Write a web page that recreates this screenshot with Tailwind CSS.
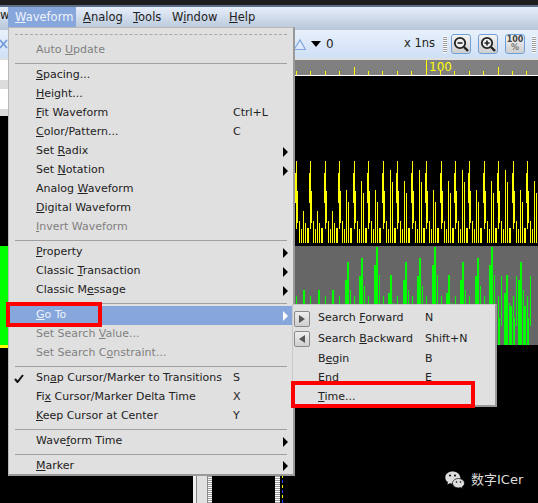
<!DOCTYPE html>
<html lang="en">

<head>
    <meta charset="UTF-8">
    <title>Waveform menu</title>
    <script src="https://cdn.jsdelivr.net/npm/@tailwindcss/browser@4"></script>
</head>

<body class="bg-black">
    <div class="relative w-[538px] h-[503px] overflow-hidden bg-black flex flex-col font-['DejaVu_Sans',sans-serif] text-[11px] text-[#222]">

        <!-- title strip -->
        <div class="h-[7px] shrink-0 bg-[#1d1d1d] border-b-2 border-[#5f6f85]"></div>

        <!-- menu bar -->
        <div class="h-[23px] shrink-0 flex bg-gradient-to-b from-[#e6eefa] to-[#b7c6d9] pb-px text-[11.5px]">
            <div class="w-[8px] overflow-hidden text-right">w</div>
            <div class="w-[68px] pl-[7px] flex items-center bg-[#86a6dc] text-[#eef3fb]"><span><u>W</u>aveform</span></div>
            <div class="pl-[7px] w-[57px] flex items-center"><span><u>A</u>nalog</span></div>
            <div class="w-[39px] flex items-center"><span><u>T</u>ools</span></div>
            <div class="w-[57px] flex items-center"><span>W<u>i</u>ndow</span></div>
            <div class="flex items-center"><span><u>H</u>elp</span></div>
        </div>

        <!-- toolbar -->
        <div class="h-[28px] shrink-0 flex items-center bg-gradient-to-b from-[#e8f0fc] to-[#cfe0f5] text-[#222]">
            <svg class="ml-[-1px] w-[9px] h-[14px]" viewBox="0 0 9 14"><path d="M1 3l7 8M8 3l-7 8" stroke="#6f9bd8" stroke-width="1.6" fill="none" /></svg>
            <svg class="ml-[286px] w-[12px] h-[14px]" viewBox="0 0 12 14"><path d="M0 12.5h11.5L6 3z" stroke="#7fa6dc" stroke-width="1.2" fill="#dfe9f7" /></svg>
            <div class="ml-[5px] w-0 h-0 border-x-[5px] border-x-transparent border-t-[6px] border-t-black"></div>
            <div class="ml-[5px] w-[78px] text-[12px]">0</div>
            <div class="w-[34px] text-[11.5px] whitespace-nowrap">x 1ns</div>
            <div class="ml-[5px] w-[4px] h-[17px] bg-[repeating-linear-gradient(#fff_0_1px,#9a9a9a_1px_2px)]"></div>
            <!-- zoom out -->
            <div class="ml-[4px] w-[20px] h-[20px] rounded-[3px] border border-[#6f9fd6] bg-gradient-to-b from-[#f4f4f4] to-[#cfcfcf] flex items-center justify-center">
                <svg class="w-[18px] h-[18px]" viewBox="0 0 18 18"><circle cx="8" cy="8" r="5.2" fill="#eee" stroke="#222" stroke-width="1.8" /><path d="M5.5 8h5" stroke="#222" stroke-width="1.6" /><path d="M12 12l4 4" stroke="#222" stroke-width="2.4" /></svg>
            </div>
            <!-- zoom in -->
            <div class="ml-[7px] w-[20px] h-[20px] rounded-[3px] border border-[#6f9fd6] bg-gradient-to-b from-[#f4f4f4] to-[#cfcfcf] flex items-center justify-center">
                <svg class="w-[18px] h-[18px]" viewBox="0 0 18 18"><circle cx="8" cy="8" r="5.2" fill="#eee" stroke="#222" stroke-width="1.8" /><path d="M5.5 8h5M8 5.5v5" stroke="#222" stroke-width="1.6" /><path d="M12 12l4 4" stroke="#222" stroke-width="2.4" /></svg>
            </div>
            <!-- zoom 100% -->
            <div class="ml-[7px] w-[20px] h-[20px] rounded-[3px] border border-[#6f9fd6] bg-gradient-to-b from-[#f4f4f4] to-[#cfcfcf] flex flex-col items-center justify-center font-bold text-[8px] leading-[8px] text-[#444]">
                <span>100</span><span class="text-[#777]">%</span>
            </div>
            <div class="ml-[7px] w-[4px] h-[17px] bg-[repeating-linear-gradient(#fff_0_1px,#9a9a9a_1px_2px)]"></div>
        </div>

        <!-- window body -->
        <div class="flex-1 flex min-h-0">
            <div class="w-[8px] shrink-0 flex flex-col">
                <div class="h-[2px] bg-[#e0e0e0]"></div>
                <div class="h-[20px] bg-white"></div>
                <div class="h-[9px] bg-[#dcdcdc]"></div>
                <div class="h-[20px] bg-white"></div>
                <div class="h-[7px] bg-[#dcdcdc]"></div>
                <div class="h-[130px] bg-black"></div>
                <div class="h-[99px] bg-[#00ff00]"></div>
                <div class="h-[3px] bg-[#ffff00]"></div>
            </div>
            <div class="flex-1 flex flex-col">
                <div class="h-[2px] bg-[#e0e0e0]"></div>
                <svg id="ruler" class="block h-[16px] w-full bg-[#808080] border-b border-white" width="530" height="16">
                    <text x="421" y="11" fill="#ffff00" font-size="12" font-family="DejaVu Sans">100</text>
                </svg>
                <svg id="yellow" class="block h-[170px] w-full" width="530" height="170"></svg>
                <svg id="green" class="block h-[99px] w-full bg-[#666666]" width="530" height="99"></svg>
            </div>
        </div>

        <!-- pane strip under the menu -->
        <div class="absolute left-[193px] top-[475px] bottom-0 w-[19px] flex">
            <div class="w-[3px] bg-[#eeeeee]"></div>
            <div class="w-[12px] bg-[#e0e0e0] border-x border-[#888]"></div>
            <div class="w-[4px] bg-[repeating-linear-gradient(#fff_0_1px,#9a9a9a_1px_2px)]"></div>
        </div>
        <div class="absolute left-[275px] top-[475px] bottom-0 w-[5px] bg-[repeating-linear-gradient(#fff_0_1px,#9a9a9a_1px_2px)]"></div>
        <div class="absolute left-[282px] top-[475px] bottom-0 w-px bg-[repeating-linear-gradient(#ffff00_0_3px,#000_3px_5px,#2040ff_5px_8px,#000_8px_10px)]"></div>

        <!-- Waveform menu -->
        <div class="absolute left-[8px] top-[27px] w-[287px] h-[449px] bg-[#e0e0e0] border-l border-t border-[#b8b8b8] border-r-2 border-b-2 border-r-[#999] border-b-[#999]">
            <div class="h-[13px] flex items-end pb-[6px] px-[6px]"><div class="w-full border-t border-dashed border-[#a8a8a8]"></div></div>

            <div class="flex h-[19px] items-center pl-[27px] text-[#808080]"><span>Auto <u>U</u>pdate</span></div>
            <div class="flex h-[6px] items-center px-[6px]"><div class="w-full h-px bg-[#a0a0a0]"></div></div>

            <div class="flex h-[19px] items-center pl-[27px]"><span><u>S</u>pacing...</span></div>
            <div class="flex h-[19px] items-center pl-[27px]"><span><u>H</u>eight...</span></div>
            <div class="flex h-[19px] items-center pl-[27px]"><span class="w-[197px]"><u>F</u>it Waveform</span><span>Ctrl+L</span></div>
            <div class="flex h-[19px] items-center pl-[27px]"><span class="w-[197px]"><u>C</u>olor/Pattern...</span><span>C</span></div>
            <div class="flex h-[19px] items-center pl-[27px] pr-[5px] justify-between"><span>Set <u>R</u>adix</span><i class="w-0 h-0 border-y-[5px] border-y-transparent border-l-[5px] border-l-black"></i></div>
            <div class="flex h-[19px] items-center pl-[27px] pr-[5px] justify-between"><span>Set <u>N</u>otation</span><i class="w-0 h-0 border-y-[5px] border-y-transparent border-l-[5px] border-l-black"></i></div>
            <div class="flex h-[19px] items-center pl-[27px]"><span>Analog <u>W</u>aveform</span></div>
            <div class="flex h-[19px] items-center pl-[27px]"><span><u>D</u>igital Waveform</span></div>
            <div class="flex h-[19px] items-center pl-[27px] text-[#808080]"><span><u>I</u>nvert Waveform</span></div>
            <div class="flex h-[6px] items-center px-[6px]"><div class="w-full h-px bg-[#a0a0a0]"></div></div>

            <div class="flex h-[19px] items-center pl-[27px] pr-[5px] justify-between"><span><u>P</u>roperty</span><i class="w-0 h-0 border-y-[5px] border-y-transparent border-l-[5px] border-l-black"></i></div>
            <div class="flex h-[19px] items-center pl-[27px] pr-[5px] justify-between"><span>Classic <u>T</u>ransaction</span><i class="w-0 h-0 border-y-[5px] border-y-transparent border-l-[5px] border-l-black"></i></div>
            <div class="flex h-[19px] items-center pl-[27px] pr-[5px] justify-between"><span>Classic M<u>e</u>ssage</span><i class="w-0 h-0 border-y-[5px] border-y-transparent border-l-[5px] border-l-black"></i></div>
            <div class="flex h-[6px] items-center px-[6px]"><div class="w-full h-px bg-[#a0a0a0]"></div></div>

            <div class="flex h-[19px] items-center pl-[27px] pr-[5px] justify-between bg-[#86a6dc] text-[#eef3fb]"><span><u>G</u>o To</span><i class="w-0 h-0 border-y-[5px] border-y-transparent border-l-[5px] border-l-white"></i></div>
            <div class="flex h-[19px] items-center pl-[27px] text-[#808080]"><span>Set Search <u>V</u>alue...</span></div>
            <div class="flex h-[19px] items-center pl-[27px] text-[#808080]"><span>Set Search C<u>o</u>nstraint...</span></div>
            <div class="flex h-[6px] items-center px-[6px]"><div class="w-full h-px bg-[#a0a0a0]"></div></div>

            <div class="relative flex h-[19px] items-center pl-[27px]">
                <svg class="absolute left-[5px] top-[5px] w-[10px] h-[9px]" viewBox="0 0 10 9"><path d="M1 5l2.5 3L9 1" stroke="#111" stroke-width="2" fill="none" /></svg>
                <span class="w-[197px]">Sn<u>a</u>p Cursor/Marker to Transitions</span><span>S</span>
            </div>
            <div class="flex h-[19px] items-center pl-[27px]"><span class="w-[197px]">Fi<u>x</u> Cursor/Marker Delta Time</span><span>X</span></div>
            <div class="flex h-[19px] items-center pl-[27px]"><span class="w-[197px]"><u>K</u>eep Cursor at Center</span><span>Y</span></div>
            <div class="flex h-[6px] items-center px-[6px]"><div class="w-full h-px bg-[#a0a0a0]"></div></div>

            <div class="flex h-[19px] items-center pl-[27px] pr-[5px] justify-between"><span>Wave<u>f</u>orm Time</span><i class="w-0 h-0 border-y-[5px] border-y-transparent border-l-[5px] border-l-black"></i></div>
            <div class="flex h-[6px] items-center px-[6px]"><div class="w-full h-px bg-[#a0a0a0]"></div></div>

            <div class="flex h-[18px] items-center pl-[27px] pr-[5px] justify-between"><span><u>M</u>arker</span><i class="w-0 h-0 border-y-[5px] border-y-transparent border-l-[5px] border-l-black"></i></div>
        </div>

        <!-- Go To submenu -->
        <div class="absolute left-[292px] top-[304px] w-[205px] h-[103px] pt-[3px] bg-[#e0e0e0] border-l border-t border-[#c8c8c8] border-r-2 border-b-2 border-r-[#999] border-b-[#999]">
            <div class="flex h-[21px] items-center pl-px">
                <div class="w-[16px] h-[16px] rounded-[2px] border border-[#8a8a8a] bg-gradient-to-b from-[#efefef] to-[#cfcfcf] flex items-center justify-center"><i class="w-0 h-0 border-y-[4px] border-y-transparent border-l-[6px] border-l-[#555]"></i></div>
                <span class="ml-[8px] w-[107px]">Search <u>F</u>orward</span><span>N</span>
            </div>
            <div class="flex h-[20px] items-center pl-px">
                <div class="w-[16px] h-[16px] rounded-[2px] border border-[#8a8a8a] bg-gradient-to-b from-[#efefef] to-[#cfcfcf] flex items-center justify-center"><i class="w-0 h-0 border-y-[4px] border-y-transparent border-r-[6px] border-r-[#555]"></i></div>
                <span class="ml-[8px] w-[107px]">Search <u>B</u>ackward</span><span>Shift+N</span>
            </div>
            <div class="flex h-[20px] items-center pl-[25px]"><span class="w-[107px]">B<u>e</u>gin</span><span>B</span></div>
            <div class="flex h-[19px] items-center pl-[25px]"><span class="w-[107px]">E<u>n</u>d</span><span>E</span></div>
            <div class="flex h-[19px] items-center pl-[25px]"><span class="w-[107px]"><u>T</u>ime...</span></div>
        </div>

        <!-- red annotation boxes -->
        <div class="absolute left-[6px] top-[302px] w-[96px] h-[25px] border-[4px] border-[#ff0000]"></div>
        <div class="absolute left-[291px] top-[381px] w-[184px] h-[27px] border-[4px] border-[#ff0000]"></div>

        <!-- watermark -->
        <div class="absolute left-[445px] top-[470px] flex items-center gap-[6px] text-[#dddddd] text-[13px] font-['DejaVu_Sans','Noto_Sans_CJK_SC',sans-serif]">
            <svg class="w-[20px] h-[18px]" viewBox="0 0 20 18"><path d="M7.5 0.5C3.4 0.5 0.3 3 0.3 6.5c0 2 1 3.600 2.700 4.800L2.300 13.500l2.600-1.300c.8.2 1.600.4 2.600.4 2.800 0 4-1 5-2.500 1-1.500 2.500-2 3-2.500C15.200 3 11.800 0.500 7.500 0.500z" fill="#dddddd" /><path d="M13.500 7.500c-3.300 0-6 2.100-6 4.700s2.700 4.700 6 4.700c.7 0 1.400-.1 2-.3l2 1.100-.5-1.800c1.500-1 2.500-2.100 2.500-3.700 0-2.600-2.700-4.700-6-4.700z" fill="#dddddd" stroke="#000" stroke-width="0.7" /><circle cx="5" cy="4.500" r="1" fill="#000" /><circle cx="10" cy="4.500" r="1" fill="#000" /><circle cx="11.500" cy="11" r=".8" fill="#000" /><circle cx="15.500" cy="11" r=".8" fill="#000" /></svg>
            <span>数字ICer</span>
        </div>
    </div>

    <script>
        const NS = 'http://www.w3.org/2000/svg'

        function bar(svg, x, y, w, h, color) {
            const r = document.createElementNS(NS, 'rect')
            r.setAttribute('x', x)
            r.setAttribute('y', y)
            r.setAttribute('width', w)
            r.setAttribute('height', h)
            r.setAttribute('fill', color)
            r.setAttribute('shape-rendering', 'crispEdges')
            svg.appendChild(r)
        }

        // all x below are page coordinates, the svgs start at x=8
        const ruler = document.getElementById('ruler')
        for (let i = 0; i < 18; i++) {
            const x = Math.round(296 + i * 14.4)
            const h = (i - 9) % 10 === 0 ? 15 : (i - 4) % 5 === 0 ? 8 : 4
            bar(ruler, x - 8, 15 - h, 1, h, '#ffff00')
        }

        // yellow: 170px tall svg starting at y=76, base at y=243
        const yellow = document.getElementById('yellow')
        const yLow = [211, 211, 211, 190, 181, 190, 170, 181, 170, 190, 181, 170, 190, 181, 170, 190, 181]
        for (let i = 0; i < 17; i++) {
            const x = Math.round(296 + i * 14.45)
            const big = x >= 390 && (x - 390) % 58 < 2
            const top = (big ? 144 : 161) - 76
            const base = 243 - 76
            bar(yellow, x - 8, top, 1, base - top - 14, '#ffff00')
            bar(yellow, x - 9, top + 12, 1, 30, '#ffff00')
            bar(yellow, x - 7, top + 30, 1, base - top - 50, '#ffff00')
            bar(yellow, x - 5, base - 22, 1, 22, '#ffff00')
            bar(yellow, x - 3, base - 14, 1, 14, '#ffff00')
            // lower steps between the tall pulses
            const low = yLow[i] - 76
            bar(yellow, x - 1, low, 1, base - low, '#ffff00')
            bar(yellow, x + 1, low + 12, 1, base - low - 12, '#ffff00')
            bar(yellow, x + 3, base - 15, 2, 15, '#ffff00')
        }

        // green: 99px tall svg starting at y=246, base at y=345
        const green = document.getElementById('green')
        const gTops = [262, 258, 247, 275]
        for (let i = 0; i < 17; i++) {
            const x = Math.round(289 + i * 14.45)
            let top = gTops[i % 4]
            if (x < 340) top = 290
            const y = top - 246
            bar(green, x - 8, y, 2, 99 - y, '#00ff00')
            bar(green, x - 10, y + 18, 2, 99 - y - 18, '#00ff00')
            bar(green, x - 5, y + 28, 1, 99 - y - 28, '#00ff00')
            // low pulses between the tall ones
            bar(green, x - 1, 50, 1, 49, '#00ff00')
            // the right end of the band is denser and starts lower
            if (x > 490) {
                bar(green, x - 4, 60, 2, 39, '#00ff00')
                bar(green, x - 1, 72, 2, 27, '#00ff00')
                bar(green, x + 2, 30, 1, 50, '#00ff00')
            }
        }
    </script>
</body>

</html>
